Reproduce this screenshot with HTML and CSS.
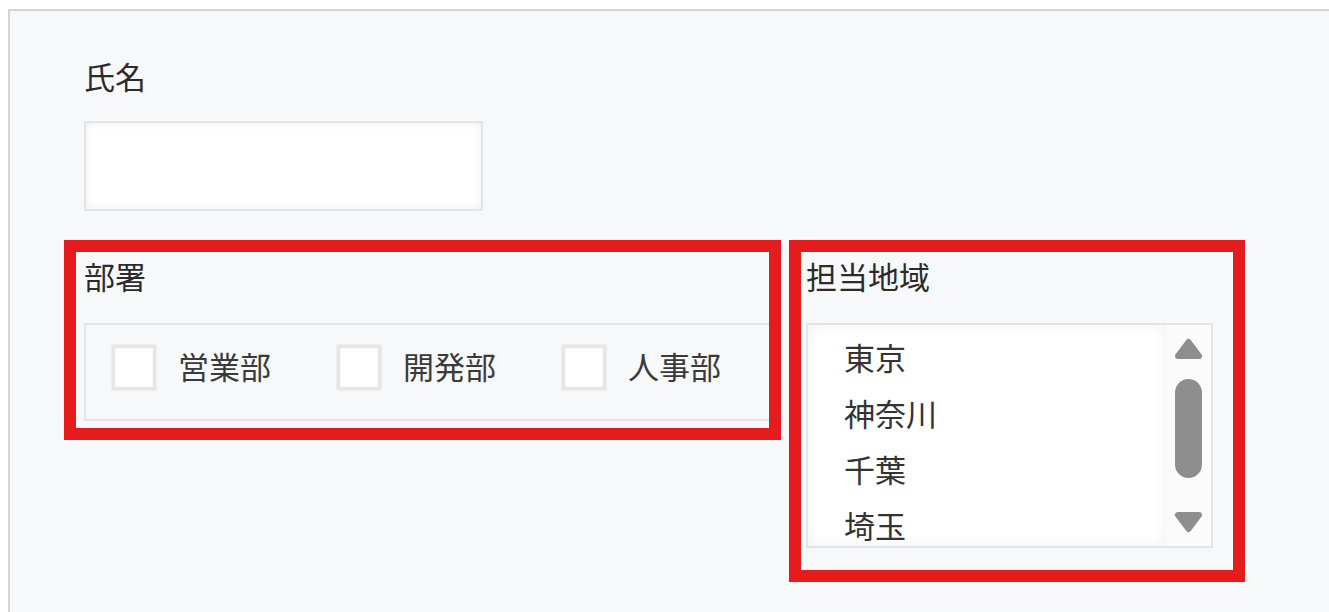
FILE: index.html
```html
<!DOCTYPE html>
<html lang="ja">
<head>
  <meta charset="UTF-8">
  <meta name="viewport" content="width=device-width, initial-scale=1.0">
  <title>登録フォーム</title>
  <link rel="stylesheet" href="styles.css">
</head>
<body>
  <form class="form-frame">
    <div class="field name-field">
      <label class="field-label" for="name">氏名</label>
      <input class="text-input" type="text" id="name">
    </div>

    <div class="field-row">
      <!-- 部署 -->
      <div class="highlight dept-box">
        <div class="field-label">部署</div>
        <div class="check-group">
          <label class="check-item"><span class="check"></span><span class="check-text">営業部</span></label>
          <label class="check-item"><span class="check"></span><span class="check-text">開発部</span></label>
          <label class="check-item"><span class="check"></span><span class="check-text">人事部</span></label>
        </div>
      </div>

      <!-- 担当地域 -->
      <div class="highlight area-box">
        <div class="field-label">担当地域</div>
        <div class="listbox">
          <ul class="list-items">
            <li>東京</li>
            <li>神奈川</li>
            <li>千葉</li>
            <li>埼玉</li>
          </ul>
          <div class="list-scroll">
            <svg width="45" height="221" viewBox="0 0 45 221">
              <polygon points="22.5,17 33,31 12,31" fill="#8e8e8e" stroke="#8e8e8e" stroke-width="6" stroke-linejoin="round"/>
              <rect x="9" y="54" width="27" height="99" rx="13.5" fill="#8e8e8e"/>
              <polygon points="12,190 33,190 22.5,204" fill="#8e8e8e" stroke="#8e8e8e" stroke-width="6" stroke-linejoin="round"/>
            </svg>
          </div>
        </div>
      </div>
    </div>
  </form>
</body>
</html>
```

FILE: styles.css
```css
html, body {
  height: 100%;
}

body {
  margin: 0;
  padding: 9px 0 0 8px;
  box-sizing: border-box;
  overflow: hidden;
  background-color: #fff;
  font-family: "Noto Sans CJK JP", "Noto Sans", sans-serif;
  color: #2b2b2b;
}

.form-frame {
  box-sizing: border-box;
  height: 100%;
  padding: 49px 0 0 54px;
  background-color: #f7f8fa;
  border-top: 2px solid #d4d4d4;
  border-left: 2px solid #d4d4d4;
}

.field-label {
  display: block;
  font-size: 31px;
  line-height: 31px;
  height: 30px;
}

.name-field {
  margin-left: 20px;
}

.name-field .field-label {
  margin-bottom: 31px;
}

.text-input {
  display: block;
  box-sizing: border-box;
  width: 399px;
  height: 90px;
  margin: 0;
  border: 2px solid #e3e4e6;
  background-color: #fff;
  box-shadow: inset 0 0 8px rgba(0, 0, 0, 0.08);
  outline: none;
}

.field-row {
  display: flex;
  align-items: flex-start;
  gap: 8px;
  margin-top: 29px;
}

.highlight {
  box-sizing: border-box;
  border: 12px solid #e61b1e;
  overflow: hidden;
}

.highlight .field-label {
  margin-bottom: 33px;
}

.dept-box {
  width: 717px;
  height: 200px;
  padding: 8px 0 7px 8px;
}

.check-group {
  box-sizing: border-box;
  width: 720px;
  height: 98px;
  padding: 20px 0 0 26px;
  border: 2px solid #e4e5e7;
  display: flex;
  gap: 66px;
}

.check-item {
  display: flex;
  align-items: flex-start;
}

.check {
  box-sizing: border-box;
  width: 44px;
  height: 45px;
  margin-right: 22px;
  background-color: #fff;
  border: 3px solid #e6e6e6;
  box-shadow: 0 0 2px rgba(0, 0, 0, 0.12), inset 0 0 3px rgba(0, 0, 0, 0.06);
}

.check-text {
  font-size: 31px;
  line-height: 31px;
  margin-top: 5px;
  color: #3a3a3a;
}

.area-box {
  width: 456px;
  height: 342px;
  padding: 8px 20px 22px 5px;
}

.listbox {
  box-sizing: border-box;
  width: 407px;
  height: 225px;
  border: 2px solid #e3e4e6;
  display: flex;
  overflow: hidden;
}

.list-items {
  flex: 1;
  margin: 0;
  padding: 4px 0 0 36px;
  list-style: none;
  background-color: #fff;
  box-shadow: inset 0 0 14px rgba(0, 0, 0, 0.06);
}

.list-items li {
  height: 56px;
  font-size: 31px;
  line-height: 56px;
  color: #333;
}

.list-scroll {
  width: 45px;
  background-color: #fbfbfb;
}

.list-scroll svg {
  display: block;
}
```
